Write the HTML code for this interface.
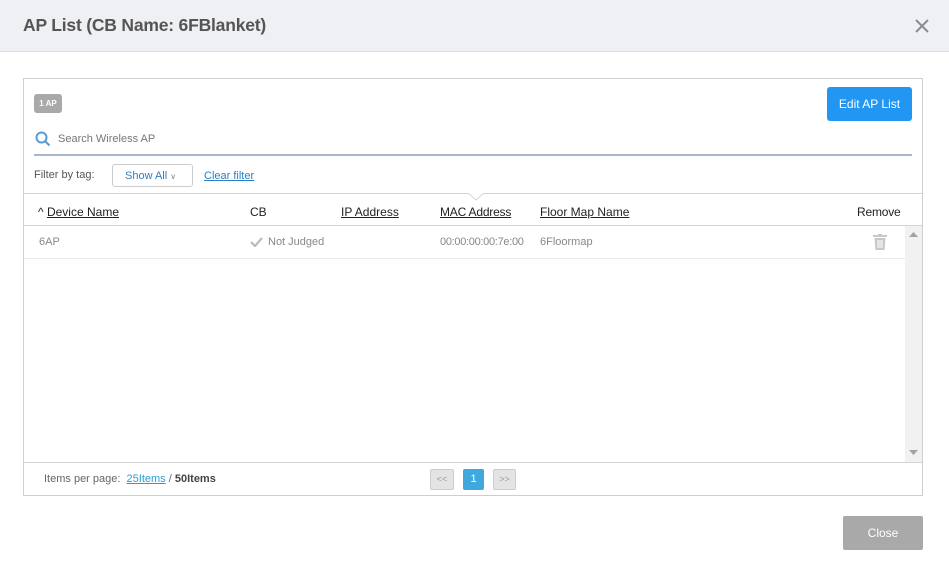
<!DOCTYPE html>
<html><head><meta charset="utf-8"><style>
*{box-sizing:border-box;margin:0;padding:0}
body{width:949px;height:566px;background:#fff;font-family:"Liberation Sans",sans-serif;position:relative;overflow:hidden;color:#333}
.a{position:absolute}
.hdr{left:0;top:0;width:949px;height:52px;background:#eff0f4;border-bottom:1px solid #dcdde2}
.title{left:23px;top:15px;font-size:17.5px;font-weight:bold;color:#555;letter-spacing:-0.2px}
.box{left:23px;top:78px;width:900px;height:418px;border:1px solid #cfcfcf}
.u{text-decoration:underline}
.h{font-size:12px;color:#222;top:205px}
.d{font-size:11px;color:#888;top:236px}
</style></head><body>
<div class="a hdr"></div>
<div class="a title">AP List (CB Name: 6FBlanket)</div>
<svg class="a" style="left:915px;top:19px" width="14" height="14"><path d="M1 1L13 13M13 1L1 13" stroke="#8a8c94" stroke-width="2"/></svg>
<div class="a box"></div>
<div class="a" style="left:34px;top:94px;width:28px;height:19px;background:#a9a9a9;border-radius:3px;color:#fff;font-size:8px;font-weight:bold;text-align:center;line-height:19px">1 AP</div>
<div class="a" style="left:827px;top:87px;width:85px;height:34px;background:#2196f3;border-radius:3px;color:#fff;font-size:12px;text-align:center;line-height:34px">Edit AP List</div>
<svg class="a" style="left:35px;top:131px" width="16" height="16"><circle cx="6.5" cy="6.5" r="5" stroke="#5b9bd5" stroke-width="2" fill="none"/><path d="M10 10L14.5 14.5" stroke="#5b9bd5" stroke-width="2"/></svg>
<div class="a" style="left:58px;top:133px;font-size:11px;color:#777">Search Wireless AP</div>
<div class="a" style="left:34px;top:154px;width:878px;height:2px;background:#a8b8c8"></div>
<div class="a" style="left:34px;top:169px;font-size:11px;color:#555">Filter by tag:</div>
<div class="a" style="left:112px;top:164px;width:81px;height:23px;border:1px solid #ccc;border-radius:3px;font-size:11px;color:#2a7fc6;line-height:22px;padding-left:12px">Show All <span style="font-size:8px;color:#888">&#8744;</span></div>
<div class="a u" style="left:204px;top:170px;font-size:11px;color:#2a7fc6">Clear filter</div>
<div class="a" style="left:24px;top:193px;width:898px;height:1px;background:#d4d4d4"></div>
<svg class="a" style="left:468px;top:193px" width="16" height="8"><path d="M0 0L8 7L16 0" fill="#fff" stroke="#d4d4d4"/></svg>
<div class="a" style="left:24px;top:225px;width:898px;height:1px;background:#d4d4d4"></div>
<div class="a h" style="left:38px">&#94; <span class="u">Device Name</span></div>
<div class="a h" style="left:250px">CB</div>
<div class="a h u" style="left:341px">IP Address</div>
<div class="a h u" style="left:440px;letter-spacing:-0.2px">MAC Address</div>
<div class="a h u" style="left:540px">Floor Map Name</div>
<div class="a h" style="left:857px;letter-spacing:-0.2px">Remove</div>
<div class="a d" style="left:39px">6AP</div>
<svg class="a" style="left:250px;top:237px" width="13" height="10"><path d="M1 5L5 9L12 1" stroke="#bbb" stroke-width="2.2" fill="none"/></svg>
<div class="a d" style="left:268px">Not Judged</div>
<div class="a d" style="left:440px;letter-spacing:-0.3px">00:00:00:00:7e:00</div>
<div class="a d" style="left:540px">6Floormap</div>
<svg class="a" style="left:873px;top:234px" width="14" height="16"><rect x="0" y="1" width="14" height="2" fill="#c5c8cc"/><rect x="5" y="0" width="4" height="2" fill="#c5c8cc"/><path d="M1.5 4h11l-1 12h-9z" fill="#c5c8cc"/><path d="M5 6v8M7 6v8M9 6v8" stroke="#fff" stroke-width="1"/></svg>
<div class="a" style="left:24px;top:258px;width:881px;height:1px;background:#e6eaee"></div>
<div class="a" style="left:905px;top:226px;width:17px;height:236px;background:#f1f1f1"></div>
<svg class="a" style="left:909px;top:232px" width="9" height="6"><path d="M0 5L4.5 0L9 5z" fill="#a3a3a3"/></svg>
<svg class="a" style="left:909px;top:450px" width="9" height="6"><path d="M0 0L4.5 5L9 0z" fill="#a3a3a3"/></svg>
<div class="a" style="left:24px;top:462px;width:898px;height:1px;background:#d4d4d4"></div>
<div class="a" style="left:44px;top:473px;font-size:11px;color:#666">Items per page:&nbsp; <span class="u" style="color:#2a9fd6">25Items</span> / <b style="color:#444">50Items</b></div>
<div class="a" style="left:430px;top:469px;width:24px;height:21px;background:#e4e4e4;border:1px solid #ccc;border-radius:2px;font-size:9px;color:#999;text-align:center;line-height:19px">&lt;&lt;</div>
<div class="a" style="left:463px;top:469px;width:21px;height:21px;background:#3fa9de;border-radius:2px;font-size:11px;color:#fff;text-align:center;line-height:21px">1</div>
<div class="a" style="left:493px;top:469px;width:23px;height:21px;background:#e4e4e4;border:1px solid #ccc;border-radius:2px;font-size:9px;color:#999;text-align:center;line-height:19px">&gt;&gt;</div>
<div class="a" style="left:843px;top:516px;width:80px;height:34px;background:#a9a9a9;border-radius:2px;color:#fff;font-size:12px;text-align:center;line-height:34px">Close</div>
</body></html>
